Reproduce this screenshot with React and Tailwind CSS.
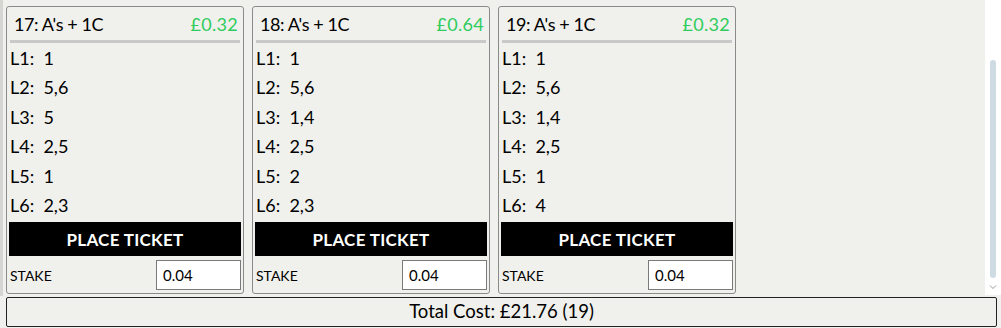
import React from 'react';

const tickets = [
  { id: 17, name: "A's + 1C", price: '£0.32', legs: ['1', '5,6', '5', '2,5', '1', '2,3'] },
  { id: 18, name: "A's + 1C", price: '£0.64', legs: ['1', '5,6', '1,4', '2,5', '2', '2,3'] },
  { id: 19, name: "A's + 1C", price: '£0.32', legs: ['1', '5,6', '1,4', '2,5', '1', '4'] },
];

const TicketCard = ({ ticket }) => (
  <div className="w-[238px] h-[288px] border border-[#8a8a8a] rounded-[3px] flex flex-col px-[2px]">
    <div className="flex items-center justify-between h-[33px] pl-[5px] pr-[3px] pt-[1px] text-[18px] text-black">
      <span className="tracking-[-0.4px]">{ticket.id}: {ticket.name}</span>
      <span className="text-[#2ecc5c] tracking-[0.3px]">{ticket.price}</span>
    </div>
    <div className="h-[3px] bg-[#c9c9c9] mx-[1px]" />
    <div className="flex flex-col pt-[1px] pl-[1px]">
      {ticket.legs.map((leg, i) => (
        <div key={i} className="h-[29.4px] leading-[29.4px] text-[18px] text-black">
          L{i + 1}:&nbsp; {leg}
        </div>
      ))}
    </div>
    <button className="mt-[2px] h-[34px] w-full bg-black text-white font-bold text-[17px] tracking-[0.3px]">
      PLACE TICKET
    </button>
    <div className="flex items-center justify-between mt-[4px] pl-[1px]">
      <span className="text-[14px] text-black">STAKE</span>
      <div className="w-[85px] h-[30px] bg-white border border-[#7a7a7a] flex items-center px-[6px] text-[15px] text-black">
        0.04
      </div>
    </div>
  </div>
);

export default function App() {
  return (
    <div className="w-[1001px] h-[328px] bg-[#f0f0ec] flex flex-col overflow-hidden" style={{ fontFamily: 'Lato, "Noto Sans", sans-serif' }}>
      <div className="flex h-[296px]">
        <div className="w-[3px] bg-[#d5d5d1]" />
        <div className="flex-1 flex gap-[8px] pl-[3px] pt-[6px]">
          {tickets.map((t) => (
            <TicketCard key={t.id} ticket={t} />
          ))}
        </div>
        <div className="w-[16px] h-[295px] bg-white flex flex-col items-center">
          <div className="mt-[60px] w-[6px] h-[218px] rounded-[3px] bg-[#cfdbe3]" />
          <svg width="8" height="6" viewBox="0 0 8 6" className="mt-[6px]">
            <path d="M1 1.5 L4 4.5 L7 1.5" fill="none" stroke="#9a9a9a" strokeWidth="1" />
          </svg>
        </div>
      </div>
      <div className="ml-[6px] mr-[4px] mt-[1px] h-[30px] border border-[#222] rounded-[2px] flex items-center justify-center text-[18.5px] text-black">
        Total Cost: £21.76 (19)
      </div>
    </div>
  );
}
